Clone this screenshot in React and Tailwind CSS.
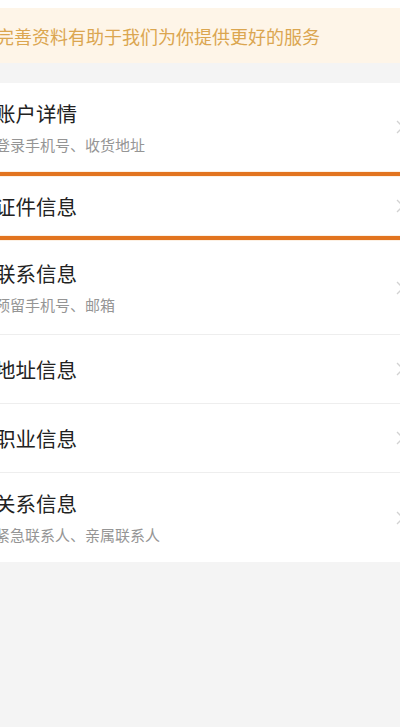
import React from "react";

const font = { fontFamily: '"Noto Sans CJK SC", "Noto Sans", sans-serif' };

function Chevron() {
  return (
    <svg width="8" height="14" viewBox="0 0 8 14" className="shrink-0 -mr-[4px]">
      <path d="M1 1 L7 7 L1 13" fill="none" stroke="#d2d2d2" strokeWidth="1.3" />
    </svg>
  );
}

function Row({ title, sub, h }) {
  return (
    <div className={`flex items-center justify-between bg-white ${h}`}>
      <div className="flex flex-col -ml-[5px]">
        <div className="text-[20.5px] leading-[26px] text-[#222]">{title}</div>
        {sub && <div className="mt-[9px] text-[15px] leading-[20px] text-[#959595]">{sub}</div>}
      </div>
      <Chevron />
    </div>
  );
}

export default function App() {
  return (
    <div className="w-[400px] h-[727px] overflow-hidden bg-[#f4f4f4]" style={font}>
      <div className="h-[8px] bg-white" />
      <div className="h-[55px] bg-[#fef5e8] flex items-center">
        <div className="-ml-[4px] text-[18px] text-[#dba650] leading-[24px] whitespace-nowrap">完善资料有助于我们为你提供更好的服务</div>
      </div>
      <div className="h-[20px]" />
      <div className="bg-white overflow-hidden">
        <Row title="账户详情" sub="登录手机号、收货地址" h="h-[88px]" />
        <div className="h-[1px] bg-[#fdf1e4]" />
        <div className="h-[4px] bg-[#e2741f]" />
        <div className="h-[1px] bg-[#fdf1e4]" />
        <Row title="证件信息" h="h-[58px]" />
        <div className="h-[1px] bg-[#fdf1e4]" />
        <div className="h-[4px] bg-[#e2741f]" />
        <div className="h-[1px] bg-[#fdf1e4]" />
        <Row title="联系信息" sub="预留手机号、邮箱" h="h-[93px]" />
        <div className="h-[1px] bg-[#eeeeee]" />
        <Row title="地址信息" h="h-[68px]" />
        <div className="h-[1px] bg-[#eeeeee]" />
        <Row title="职业信息" h="h-[68px]" />
        <div className="h-[1px] bg-[#eeeeee]" />
        <Row title="关系信息" sub="紧急联系人、亲属联系人" h="h-[89px]" />
      </div>
    </div>
  );
}
